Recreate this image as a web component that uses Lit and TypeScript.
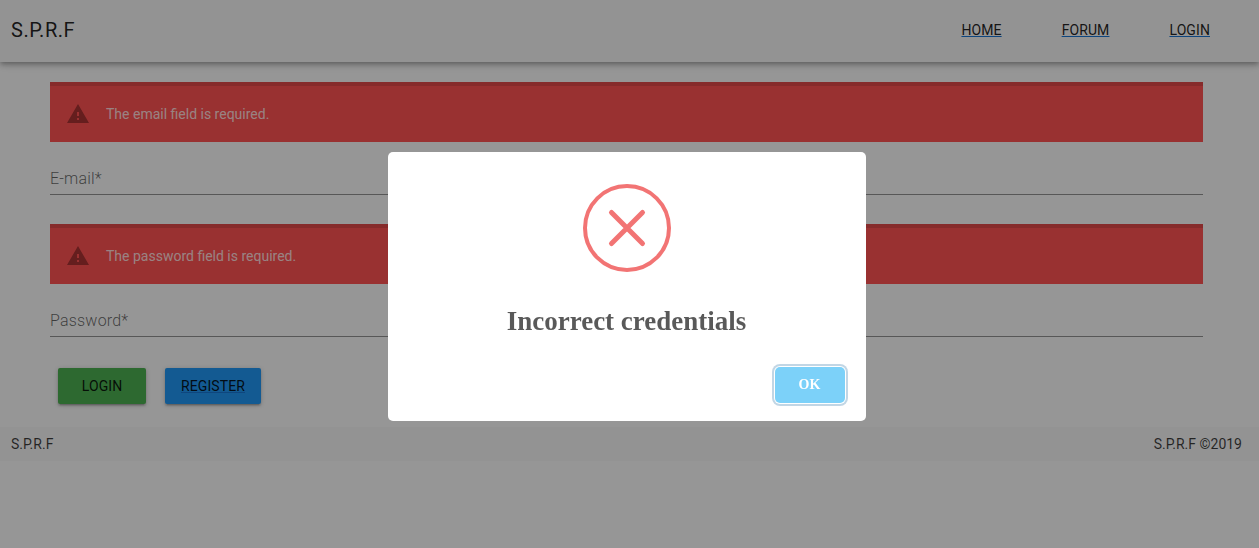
import { LitElement, html, css } from 'lit';
import { customElement } from 'lit/decorators.js';

const warning = html`<svg class="warn" viewBox="0 0 24 24" width="24" height="24"><path fill="currentColor" d="M1 21h22L12 2 1 21zm12-3h-2v-2h2v2zm0-4h-2v-4h2v4z"/></svg>`;

@customElement('app-root')
class AppRoot extends LitElement {
  static styles = css`
    :host {
      display: block;
      min-height: 548px;
      background: #fafafa;
      font-family: Roboto, "Liberation Sans", sans-serif;
      color: rgba(0, 0, 0, 0.87);
    }
    .nav {
      height: 62px;
      display: flex;
      align-items: center;
      justify-content: space-between;
      padding: 0 49px 2px 11px;
      box-sizing: border-box;
      background: #f5f5f5;
      box-shadow: 0 2px 4px -1px rgba(0, 0, 0, 0.2), 0 4px 5px rgba(0, 0, 0, 0.14), 0 1px 10px rgba(0, 0, 0, 0.12);
    }
    .brand {
      font-size: 20px;
      letter-spacing: 0.5px;
    }
    .links {
      display: flex;
      gap: 60px;
    }
    a {
      font-size: 14px;
      letter-spacing: 0.1px;
      color: rgba(0, 0, 0, 0.87);
      text-decoration: underline;
      text-decoration-color: #1976d2;
    }
    .main {
      padding: 20px 56px 0 50px;
    }
    .alert {
      height: 60px;
      box-sizing: border-box;
      border-top: 4px solid #e04848;
      background: #ff5252;
      display: flex;
      align-items: center;
      gap: 16px;
      padding: 0 0 0 16px;
      color: rgba(255, 255, 255, 0.8);
      font-size: 14px;
    }
    .warn {
      color: #a83232;
    }
    .field {
      margin-bottom: 29px;
      border-bottom: 1px solid rgba(0, 0, 0, 0.42);
      display: flex;
      align-items: flex-end;
      padding-bottom: 6px;
      height: 46px;
      font-size: 16px;
      font-weight: 300;
      letter-spacing: 0.2px;
      color: rgba(0, 0, 0, 0.6);
    }
    .actions {
      display: flex;
      gap: 19px;
      padding: 2px 0 0 8px;
    }
    .btn {
      height: 36px;
      display: flex;
      align-items: center;
      justify-content: center;
      border-radius: 2px;
      font-size: 14px;
      letter-spacing: 0.1px;
      box-shadow: 0 1px 5px rgba(0, 0, 0, 0.2), 0 2px 2px rgba(0, 0, 0, 0.14), 0 3px 1px -2px rgba(0, 0, 0, 0.12);
    }
    .login {
      width: 88px;
      background: #4caf50;
    }
    .register {
      width: 96px;
      background: #2196f3;
      text-decoration: underline;
      text-decoration-color: #1976d2;
    }
    .footer {
      margin-top: 23px;
      height: 34px;
      display: flex;
      align-items: center;
      justify-content: space-between;
      padding: 0 17px 0 11px;
      background: #f5f5f5;
      font-size: 14px;
      color: rgba(0, 0, 0, 0.75);
    }
    .overlay {
      position: fixed;
      inset: 0;
      background: rgba(0, 0, 0, 0.4);
      display: flex;
      justify-content: center;
      align-items: center;
      padding: 25px 6px 0 0;
      box-sizing: border-box;
    }
    .modal {
      width: 478px;
      height: 269px;
      box-sizing: border-box;
      background: #fff;
      border-radius: 5px;
      padding-top: 32px;
      display: flex;
      flex-direction: column;
      align-items: center;
      font-family: "Liberation Serif", "Times New Roman", serif;
    }
    .title {
      margin-top: 31px;
      font-size: 27px;
      line-height: 36px;
      font-weight: 700;
      color: rgba(0, 0, 0, 0.65);
    }
    .foot {
      align-self: stretch;
      display: flex;
      justify-content: flex-end;
      padding: 28px 21px 0 0;
    }
    .ok {
      width: 70px;
      height: 36px;
      display: flex;
      align-items: center;
      justify-content: center;
      border-radius: 5px;
      background: #7cd1f9;
      color: #fff;
      font-size: 14px;
      font-weight: 700;
      box-shadow: 0 0 0 1px #fff, 0 0 0 3px rgba(43, 114, 165, 0.29);
    }
  `;

  render() {
    return html`
      <div class="nav">
        <div class="brand">S.P.R.F</div>
        <div class="links"><a>HOME</a><a>FORUM</a><a>LOGIN</a></div>
      </div>
      <div class="main">
        <div class="alert">${warning}<span>The email field is required.</span></div>
        <div class="field">E-mail*</div>
        <div class="alert">${warning}<span>The password field is required.</span></div>
        <div class="field">Password*</div>
        <div class="actions">
          <div class="btn login">LOGIN</div>
          <div class="btn register">REGISTER</div>
        </div>
      </div>
      <div class="footer"><span>S.P.R.F</span><span>S.P.R.F ©2019</span></div>
      <div class="overlay">
        <div class="modal">
          <svg width="88" height="88" viewBox="0 0 88 88">
            <circle cx="44" cy="44" r="42" fill="none" stroke="#f27474" stroke-width="4"/>
            <path d="M28.5 28.5 L59.5 59.5 M59.5 28.5 L28.5 59.5" stroke="#f27474" stroke-width="5" stroke-linecap="round"/>
          </svg>
          <div class="title">Incorrect credentials</div>
          <div class="foot"><div class="ok">OK</div></div>
        </div>
      </div>
    `;
  }
}
